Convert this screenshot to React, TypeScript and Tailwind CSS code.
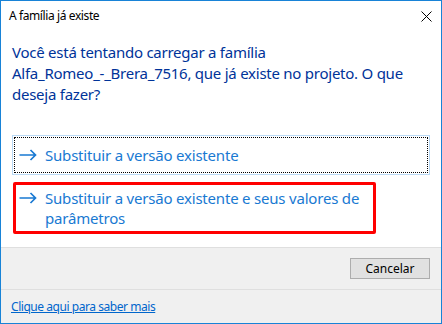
function Arrow() {
  return (
    <svg width="18" height="12" viewBox="0 0 18 12" className="shrink-0">
      <path d="M0.5 6h16M11.5 1l5 5-5 5" fill="none" stroke="#1979d2" strokeWidth="1.7" />
    </svg>
  );
}

export default function App() {
  return (
    <div
      className="w-[442px] h-[324px] border border-[#1883d7] bg-white flex flex-col text-black"
      style={{ fontFamily: '"Noto Sans", "Open Sans", sans-serif' }}
    >
      <div className="h-[30px] flex items-center justify-between pl-[8px] pr-[9px] shrink-0">
        <span className="text-[12px] leading-none tracking-[-0.4px]">A família já existe</span>
        <svg width="11" height="11" viewBox="0 0 11 11">
          <path d="M0.5 0.5l10 10M10.5 0.5l-10 10" stroke="#000" strokeWidth="1" />
        </svg>
      </div>

      <div className="flex-1 flex flex-col px-[11px] pt-[11px]">
        <p className="text-[15px] leading-[21px] text-[#003399] tracking-[-0.25px] whitespace-nowrap">
          Você está tentando carregar a família
          <br />
          Alfa_Romeo_-_Brera_7516, que já existe no projeto. O que
          <br />
          deseja fazer?
        </p>

        <div className="mt-[30px] h-[40px] border border-[#b9d9f5] p-[1px]">
          <div className="h-full border border-dotted border-black flex items-center gap-[8px] pl-[4px]">
            <Arrow />
            <span className="text-[15px] text-[#1979d2] tracking-[-0.2px]">Substituir a versão existente</span>
          </div>
        </div>

        <div className="mt-[7px] w-[363px] ml-[1px] h-[52px] border-[3px] border-[#ff0000] rounded-[2px] flex items-start gap-[8px] pl-[3px] pt-[3px]">
          <div className="h-[20px] flex items-center">
            <Arrow />
          </div>
          <span className="text-[15px] leading-[20px] text-[#1979d2] tracking-[-0.2px]">
            Substituir a versão existente e seus valores de
            <br />
            parâmetros
          </span>
        </div>
      </div>

      <div className="h-[42px] bg-[#f0f0f0] border-t border-[#dfdfdf] flex items-center justify-end pr-[11px] shrink-0">
        <button className="w-[80px] h-[21px] bg-[#e1e1e1] border border-[#adadad] text-[12px] leading-none">
          Cancelar
        </button>
      </div>
      <div className="h-[34px] bg-[#f0f0f0] border-t border-[#dfdfdf] flex items-center pl-[10px] shrink-0">
        <a className="text-[12px] text-[#0066cc] underline leading-none tracking-[-0.45px]">
          Clique aqui para saber mais
        </a>
      </div>
    </div>
  );
}
